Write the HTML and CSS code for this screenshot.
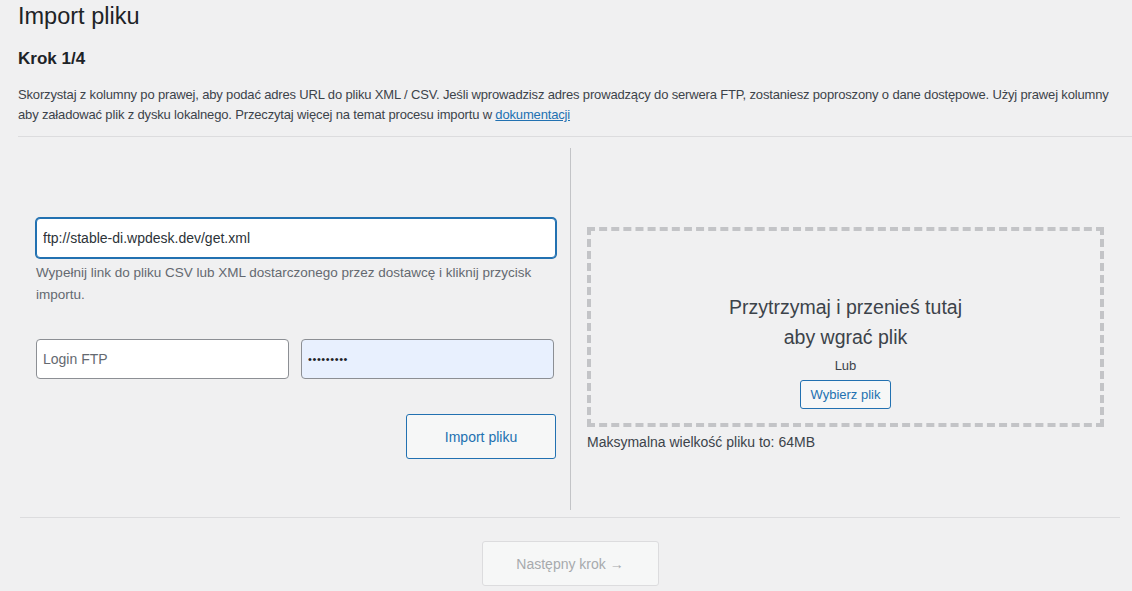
FILE: index.html
```html
<!DOCTYPE html>
<html lang="pl">
<head>
<meta charset="utf-8">
<title>Import pliku</title>
<link rel="stylesheet" href="styles.css">
</head>
<body>
<div class="page">
  <h1 class="title">Import pliku</h1>
  <h2 class="step">Krok 1/4</h2>
  <p class="intro">Skorzystaj z kolumny po prawej, aby podać adres URL do pliku XML / CSV. Jeśli wprowadzisz adres prowadzący do serwera FTP, zostaniesz poproszony o dane dostępowe. Użyj prawej kolumny aby załadować plik z dysku lokalnego. Przeczytaj więcej na temat procesu importu w <a href="#" class="link">dokumentacji</a></p>
  <hr class="sep-top">
  <div class="box">
    <div class="columns">
      <div class="col col-left">
        <input class="field field-url is-focused" type="text" value="ftp://stable-di.wpdesk.dev/get.xml">
        <p class="help">Wypełnij link do pliku CSV lub XML dostarczonego przez dostawcę i kliknij przycisk importu.</p>
        <div class="cred-row">
          <input class="field" type="text" placeholder="Login FTP">
          <input class="field field-autofill" type="password" value="123456789">
        </div>
        <div class="submit-row">
          <button class="btn btn-import" type="button">Import pliku</button>
        </div>
      </div>
      <div class="col col-right">
        <div class="dropzone">
          <div class="drop-title">Przytrzymaj i przenieś tutaj<br>aby wgrać plik</div>
          <div class="drop-or">Lub</div>
          <button class="btn btn-choose" type="button">Wybierz plik</button>
        </div>
        <p class="max-size">Maksymalna wielkość pliku to: 64MB</p>
      </div>
    </div>
    <hr class="sep-bottom">
    <div class="actions">
      <button class="btn btn-next" type="button" disabled>Następny krok →</button>
    </div>
  </div>
</div>
</body>
</html>
```
FILE: styles.css
```css
* { box-sizing: border-box; }

html, body {
  margin: 0;
  padding: 0;
  background: #f0f0f1;
}

body {
  font-family: "Liberation Sans", Arial, sans-serif;
  color: #3c434a;
  font-size: 13px;
  overflow: hidden;
}

.page {
  padding-top: 1px;
}

.title {
  margin: 0 0 0 18px;
  font-size: 23.5px;
  font-weight: 400;
  line-height: 30px;
  color: #1d2327;
}

.step {
  margin: 16px 0 0 18px;
  font-size: 17px;
  font-weight: 700;
  line-height: 24px;
  color: #1d2327;
}

.intro {
  margin: 14px 0 0 18px;
  font-size: 13px;
  line-height: 20px;
  letter-spacing: -0.16px;
  color: #3c434a;
}

.link {
  color: #2271b1;
  text-decoration: underline;
}

.sep-top {
  margin: 11px 0 0 18px;
  border: 0;
  border-top: 1px solid #dcdcde;
  height: 0;
}

.box {
  margin: 11px 12px 0 20px;
}

.columns {
  display: flex;
}

.col {
  width: 550px;
  display: flex;
  flex-direction: column;
}

.col-left {
  padding: 70px 14px 51px 16px;
}

.col-right {
  padding: 79px 16px 0 16px;
  border-left: 1px solid #c3c4c7;
}

.field {
  display: block;
  width: 100%;
  height: 40px;
  margin: 0;
  padding: 0 6px;
  font-family: "Liberation Sans", Arial, sans-serif;
  font-size: 14px;
  color: #2c3338;
  background: #fff;
  border: 1px solid #8c8f94;
  border-radius: 4px;
  outline: none;
}

.field::placeholder {
  color: #646970;
}

.is-focused {
  border-color: #2271b1;
  box-shadow: 0 0 0 1px #2271b1;
}

.field-autofill {
  background: #e8f0fe;
  color: #1d2327;
  font-size: 11px;
  letter-spacing: 0.6px;
}

.help {
  margin: 4px 0 0 0;
  font-size: 13.5px;
  line-height: 22px;
  color: #646970;
}

.cred-row {
  display: grid;
  grid-template-columns: 1fr 1fr;
  gap: 12px;
  margin-top: 33px;
  width: 518px;
}

.submit-row {
  display: flex;
  justify-content: flex-end;
  margin-top: 35px;
}

.btn {
  font-family: "Liberation Sans", Arial, sans-serif;
  font-size: 13px;
  border-radius: 3px;
  cursor: pointer;
}

.btn-import {
  width: 150px;
  height: 45px;
  font-size: 14px;
  color: #2271b1;
  background: #f6f7f7;
  border: 1px solid #2271b1;
}

.dropzone {
  height: 200px;
  border: 4px dashed #c3c4c7;
  padding-top: 61px;
  display: flex;
  flex-direction: column;
  align-items: center;
}

.drop-title {
  font-size: 19.5px;
  line-height: 30px;
  text-align: center;
  color: #3c434a;
}

.drop-or {
  margin-top: 4px;
  font-size: 13px;
  line-height: 20px;
  color: #3c434a;
}

.btn-choose {
  margin-top: 4px;
  height: 29px;
  padding: 0 10px;
  color: #2271b1;
  background: #f6f7f7;
  border: 1px solid #2271b1;
}

.max-size {
  margin: 5px 0 0 0;
  font-size: 14px;
  line-height: 20px;
  color: #3c434a;
}

.sep-bottom {
  margin: 7px 0 0 0;
  border: 0;
  border-top: 1px solid #dcdcde;
  height: 0;
}

.actions {
  display: flex;
  justify-content: center;
  margin-top: 23px;
}

.btn-next {
  width: 177px;
  height: 45px;
  font-size: 14px;
  color: #a7aaad;
  background: #f6f7f7;
  border: 1px solid #dcdcde;
  cursor: default;
}
```
